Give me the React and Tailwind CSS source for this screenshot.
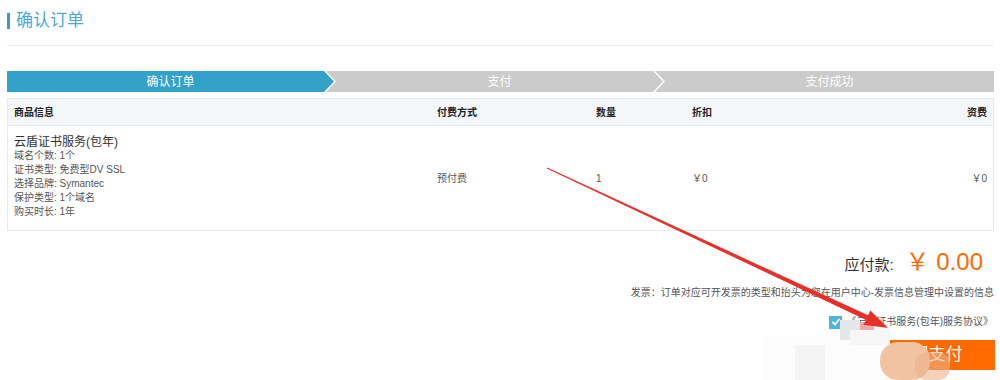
const font = { fontFamily: '"Liberation Sans", "Noto Sans CJK SC", sans-serif' };

const steps = [
    { label: '确认订单', active: true },
    { label: '支付', active: false },
    { label: '支付成功', active: false },
];

const details = ['域名个数: 1个', '证书类型: 免费型DV SSL', '选择品牌: Symantec', '保护类型: 1个域名', '购买时长: 1年'];

export default function App() {
    return (
        <div className="relative w-[1000px] h-[380px] overflow-hidden bg-white text-[#333] pl-[7px] pr-[6px]" style={font}>
            {/* 标题 */}
            <div className="pt-[12px] pb-[15px] border-b border-[#ebebeb] flex items-center">
                <span className="w-[3px] h-[16px] bg-[#2f9fcf]"></span>
                <h1 className="ml-[6px] text-[17px] leading-[18px] text-[#4aa8d6]">确认订单</h1>
            </div>

            {/* 步骤条 */}
            <div className="mt-[25px] flex h-[21px]">
                {steps.map((s, i) => (
                    <div
                        key={s.label}
                        className={
                            (s.active ? 'bg-[#33a2cb] ' : 'bg-[#cbcbcb] ') +
                            (i === 0
                                ? 'w-[327px] [clip-path:polygon(0_0,calc(100%_-_10px)_0,100%_50%,calc(100%_-_10px)_100%,0_100%)] '
                                : i === 1
                                ? 'w-[337px] -ml-[8px] pl-[10px] [clip-path:polygon(0_0,calc(100%_-_10px)_0,100%_50%,calc(100%_-_10px)_100%,0_100%,10px_50%)] '
                                : 'flex-1 -ml-[8px] pl-[10px] [clip-path:polygon(0_0,100%_0,100%_100%,0_100%,10px_50%)] ') +
                            'flex items-center justify-center text-white text-[12px]'
                        }
                    >
                        {s.label}
                    </div>
                ))}
            </div>

            {/* 订单表格 */}
            <div className="mt-[6px] border border-[#e6e9ef]">
                <div className="grid grid-cols-[423px_159px_96px_1fr_auto] h-[27px] items-center bg-[#f5f6fa] border-b border-[#e6e9ef] text-[10px] font-bold text-[#222]">
                    <div className="pl-[6px]">商品信息</div>
                    <div className="pl-[6px]">付费方式</div>
                    <div className="pl-[6px]">数量</div>
                    <div className="pl-[6px]">折扣</div>
                    <div className="pr-[6px]">资费</div>
                </div>
                <div className="grid grid-cols-[423px_159px_96px_1fr_auto] items-center text-[10px] text-[#555]">
                    <div className="pl-[6px] pt-[10px] pb-[11px]">
                        <div className="text-[12px] leading-[13px] text-[#333]">云盾证书服务(包年)</div>
                        {details.map((d) => (
                            <div key={d} className="leading-[14px]">{d}</div>
                        ))}
                    </div>
                    <div className="pl-[6px]">预付费</div>
                    <div className="pl-[6px]">1</div>
                    <div className="pl-[6px]">￥0</div>
                    <div className="pr-[6px]">￥0</div>
                </div>
            </div>

            {/* 金额 */}
            <div className="mt-[16px] pr-[11px] flex justify-end items-baseline">
                <span className="text-[15px] text-[#333]">应付款:</span>
                <span className="ml-[12px] text-[24px] leading-[30px] text-[#ff6a00]">￥ 0.00</span>
            </div>
            <div className="mt-[9px] text-right text-[10px] leading-[14px] text-[#555]">
                发票：订单对应可开发票的类型和抬头为您在用户中心-发票信息管理中设置的信息
            </div>
            <div className="mt-[15px] flex justify-end items-center text-[10px] leading-[14px] text-[#555] pr-[1px]">
                <span className="w-[13px] h-[13px] bg-[#4fb3e3] flex items-center justify-center">
                    <svg width="10" height="10" viewBox="0 0 10 10" fill="none" stroke="white" strokeWidth="1.8">
                        <path d="M1.5 5 L4 7.5 L8.5 2" />
                    </svg>
                </span>
                <span className="ml-[4px]">《云盾证书服务(包年)服务协议》</span>
            </div>
            <div className="mt-[11px] flex justify-end">
                <button className="w-[105px] h-[30px] bg-[#ff6a00] text-white text-[17px] pr-[28px] -mr-[1px]">立即支付</button>
            </div>

            {/* 打码遮挡 */}
            <div className="absolute left-[762px] top-[337px] w-[128px] h-[43px] bg-[#fcfcfc]"></div>
            <div className="absolute left-[840px] top-[320px] w-[20px] h-[20px] bg-[#e3e7ea]"></div>
            <div className="absolute left-[860px] top-[322px] w-[14px] h-[18px] bg-[#eaa4a0] opacity-90"></div>
            <div className="absolute left-[850px] top-[330px] w-[40px] h-[15px] bg-[#f6f6f6]"></div>
            <div className="absolute left-[795px] top-[345px] w-[30px] h-[35px] bg-[#f4f4f4]"></div>
            <div className="absolute left-[880px] top-[342px] w-[50px] h-[38px] rounded-[18px] bg-[#f2c3a2]"></div>
            <div className="absolute left-[915px] top-[352px] w-[35px] h-[28px] rounded-[12px] bg-[#eab08a] opacity-60"></div>

            {/* 红色箭头 */}
            <svg className="absolute left-0 top-0 pointer-events-none" width="1000" height="380">
                <polygon
                    fill="#e8302a"
                    points="546.8,168.4 865.9,319.9 863.6,324.8 888,328 870.4,310.4 868.1,315.3 547.2,167.6"
                />
            </svg>
        </div>
    );
}
